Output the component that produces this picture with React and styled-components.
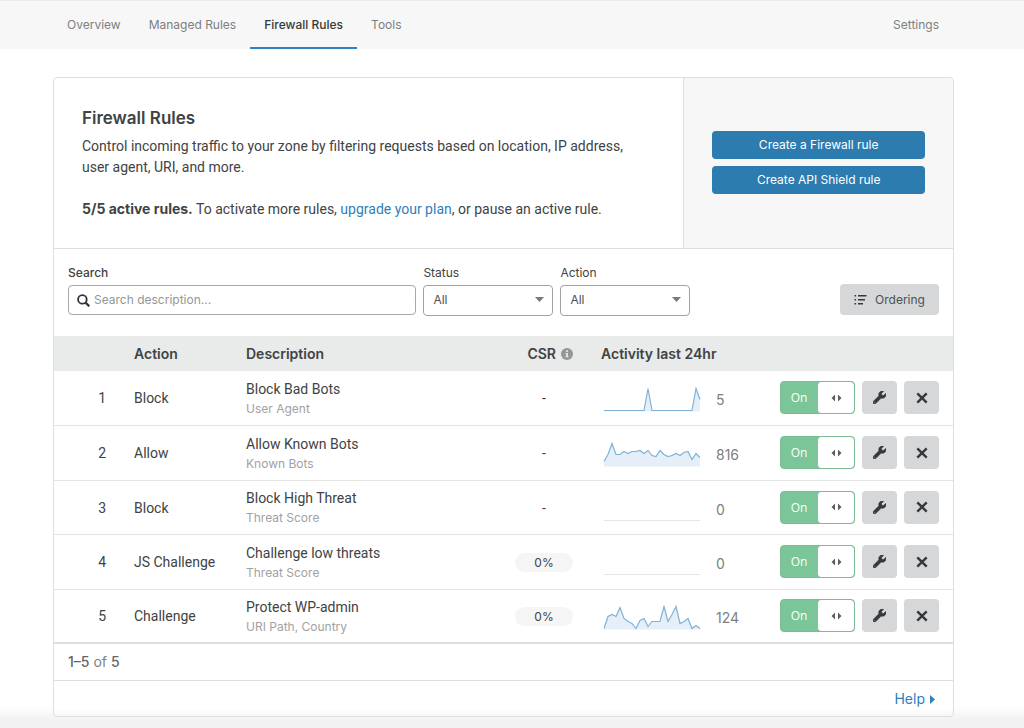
import React, { useId, useState } from 'react';
import styled, { createGlobalStyle } from 'styled-components';
import { FaWrench } from 'react-icons/fa';

const GlobalStyle = createGlobalStyle`
    *, *::before, *::after {
        box-sizing: border-box;
    }
    body {
        margin: 0;
        background-color: #fff;
        color: #404344;
        font-family: Inter, "Liberation Sans", sans-serif;
        font-size: 14px;
        line-height: 21px;
    }
    button, input, select {
        font-family: inherit;
    }
`;

const Page = styled.div`
    min-height: 100vh;
    display: flex;
    flex-direction: column;
    background: linear-gradient(to top, #f1f1f1 8px, #fff 22px);
`;

const NavBar = styled.nav`
    background-color: #f7f7f7;
    border-top: 1px solid #ebebeb;
    padding-right: 18px;
`;

const NavInner = styled.div`
    display: flex;
    max-width: 900px;
    margin: 0 auto;
`;

const Tab = styled.a`
    height: 48px;
    padding: 0 14px;
    line-height: 47px;
    font-size: 12px;
    text-decoration: none;
    color: ${(p) => (p.$active ? '#36393a' : '#7d7f80')};
    font-weight: ${(p) => (p.$active ? 500 : 400)};
    border-bottom: ${(p) => (p.$active ? '2px solid #2f83bf' : '0')};
    &:last-child {
        margin-left: auto;
    }
`;

const Main = styled.main`
    padding: 28px 17px 12px 0;
`;

const Card = styled.section`
    max-width: 901px;
    margin: 0 auto;
    background: linear-gradient(to top, #f7f7f7, #fff 8px);
    border: 1px solid #dedede;
    border-radius: 4px;
    overflow: hidden;
`;

const Intro = styled.header`
    display: flex;
    border-bottom: 1px solid #dedede;
`;

const IntroText = styled.div`
    flex: 1;
    padding: 28px;
`;

const Title = styled.h2`
    margin: 0 0 6px;
    font-size: 17px;
    line-height: 24px;
    font-weight: 600;
`;

const Paragraph = styled.p`
    max-width: 560px;
    margin: 0 0 21px;
    font-family: Roboto, sans-serif;
    &:last-child {
        margin-bottom: 0;
    }
    strong {
        font-family: Inter, sans-serif;
        line-height: 20px;
    }
`;

const Link = styled.a`
    color: #2f7fbc;
    text-decoration: none;
`;

const IntroActions = styled.div`
    width: 30%;
    padding: 0 28px 2px;
    display: flex;
    flex-direction: column;
    justify-content: center;
    gap: 7px;
    background-color: #f7f7f7;
    border-left: 1px solid #dedede;
`;

const PrimaryButton = styled.button`
    height: 28px;
    border: 0;
    border-radius: 4px;
    background-color: #2c7cb0;
    color: #fff;
    font-size: 12px;
    cursor: pointer;
`;

const Filters = styled.form`
    display: flex;
    align-items: flex-start;
    gap: 7px;
    padding: 14px 14px 20px;
`;

const Field = styled.div`
    display: flex;
    flex-direction: column;
    width: ${(p) => p.$width};
`;

const Label = styled.label`
    font-size: 12px;
    line-height: 20px;
    margin-bottom: 2px;
    font-weight: ${(p) => (p.$strong ? 500 : 400)};
`;

const SearchBox = styled.div`
    display: flex;
    align-items: center;
    gap: 4px;
    height: 30px;
    padding: 0 8px;
    border: 1px solid #a5a7a8;
    border-radius: 4px;
    background-color: #fff;
`;

const SearchInput = styled.input`
    flex: 1;
    min-width: 0;
    padding: 0 0 2px;
    border: 0;
    outline: 0;
    font-size: 12px;
    background: none;
    &::placeholder {
        color: #949697;
    }
`;

const SelectBox = styled.div`
    display: grid;
    align-items: center;
    & > * {
        grid-area: 1 / 1;
    }
    & > svg {
        justify-self: end;
        margin: 0 9px 2px 0;
        pointer-events: none;
    }
`;

const Select = styled.select`
    appearance: none;
    width: 100%;
    height: 31px;
    padding: 0 9px 2px;
    border: 1px solid #a0a2a3;
    border-radius: 4px;
    background-color: #fff;
    color: #4d5051;
    font-size: 12px;
`;

const OrderingButton = styled.button`
    display: flex;
    align-items: center;
    justify-content: center;
    gap: 8px;
    width: 99px;
    height: 31px;
    margin: 21px 0 0 auto;
    border: 0;
    border-radius: 4px;
    background-color: #d5d7d8;
    color: #4d5051;
    font-size: 12px;
    cursor: pointer;
`;

const Table = styled.table`
    width: 100%;
    table-layout: fixed;
    border-collapse: collapse;
`;

const HeadCell = styled.th`
    height: 35px;
    padding: 0 14px;
    background-color: #e9eaea;
    font-weight: 600;
    text-align: ${(p) => p.$align || 'left'};
    width: ${(p) => p.$width || 'auto'};
    white-space: nowrap;
    svg {
        margin-left: 5px;
        vertical-align: -1px;
    }
`;

const Row = styled.tr`
    height: 54px;
    border-bottom: 1px solid #e4e4e4;
    &:nth-child(even) {
        height: 55px;
    }
    &:last-child {
        border-bottom: 2px solid #dedede;
    }
`;

const Cell = styled.td`
    padding: 2px 14px 0;
    font-family: Roboto, sans-serif;
    text-align: ${(p) => p.$align || 'left'};
    white-space: nowrap;
`;

const Description = styled.div`
    line-height: 20px;
`;

const Muted = styled.div`
    color: #a0a2a3;
    font-family: Inter, sans-serif;
    font-size: 12px;
    line-height: 20px;
`;

const Pill = styled.span`
    display: block;
    border-radius: 10px;
    background-color: #f5f5f5;
    font-family: Inter, sans-serif;
    font-size: 12px;
    line-height: 19px;
`;

const Activity = styled.div`
    display: flex;
    align-items: center;
    gap: 15px;
    padding: 2px 0 0 2px;
    color: #7d7f80;
    font-family: Inter, sans-serif;
`;

const Controls = styled.div`
    display: flex;
    justify-content: flex-end;
    gap: 7px;
    padding-bottom: 2px;
`;

const Toggle = styled.label`
    display: flex;
    width: 75px;
    height: 33px;
    border: 1px solid ${(p) => (p.$on ? '#7dbb95' : '#a5a7a8')};
    border-radius: 4px;
    background-color: ${(p) => (p.$on ? '#7ac698' : '#b6b8b9')};
    cursor: pointer;
    flex-direction: ${(p) => (p.$on ? 'row' : 'row-reverse')};
    overflow: hidden;
`;

const HiddenCheckbox = styled.input`
    appearance: none;
    width: 0;
    height: 0;
    margin: 0;
`;

const ToggleText = styled.span`
    flex: 1;
    color: #fff;
    font-family: "Open Sans", sans-serif;
    font-size: 12px;
    line-height: 32px;
    text-align: center;
`;

const Knob = styled.span`
    width: 37px;
    display: flex;
    align-items: center;
    justify-content: center;
    border-left: 1px solid #8fbfa2;
    border-radius: 4px;
    background-color: #fff;
`;

const IconButton = styled.button`
    display: flex;
    align-items: center;
    justify-content: center;
    width: 35px;
    height: 33px;
    padding: 0;
    border: 0;
    border-radius: 4px;
    background-color: #d5d7d8;
    color: #36393a;
    cursor: pointer;
`;

const Pagination = styled.div`
    padding: 7px 14px;
    color: #7d7f80;
    line-height: 22px;
    border-bottom: 1px solid #dedede;
    strong {
        font-weight: 500;
        color: #62676a;
    }
`;

const Footer = styled.footer`
    padding: 7px 18px;
    text-align: right;
    svg {
        margin-left: 5px;
    }
`;

const SearchIcon = () => (
    <svg width="13" height="13" viewBox="0 0 13 13" fill="none" stroke="#303334" strokeWidth="1.8" aria-hidden="true">
        <circle cx="5.4" cy="5.4" r="4.3" />
        <path d="M8.6 8.6L12.3 12.3" strokeWidth="2.2" />
    </svg>
);

const CaretIcon = () => (
    <svg width="9" height="5" viewBox="0 0 9 5" fill="#777a7b" aria-hidden="true">
        <path d="M0 0h9L4.5 5z" />
    </svg>
);

const ListIcon = () => (
    <svg width="13" height="12" viewBox="0 0 13 12" fill="#36393a" aria-hidden="true">
        <path d="M.5 1h1.6v1.6H.5zM.5 5h1.6v1.6H.5zM.5 9h1.6v1.6H.5zM4 1h8.5v1.6H4zM4 5h7v1.6H4zM4 9h5v1.6H4z" />
    </svg>
);

const InfoIcon = () => (
    <svg width="12" height="12" viewBox="0 0 12 12" aria-hidden="true">
        <circle cx="6" cy="6" r="6" fill="#949697" />
        <path d="M5.2 2.3h1.7v1.6H5.2zM4.6 4.9h2.3v3.4h.7v1H4.5v-1h.7V5.9h-.6z" fill="#e9eaea" />
    </svg>
);

const ArrowsIcon = () => (
    <svg width="11" height="8" viewBox="0 0 11 8" fill="#5c5f60" aria-hidden="true">
        <path d="M4 0.5v7L0.5 4zM7 0.5v7L10.5 4z" />
    </svg>
);

const WrenchIcon = styled(FaWrench)`
    width: 13px;
    height: 13px;
    stroke: currentColor;
    stroke-width: 24px;
`;

const CloseIcon = () => (
    <svg width="12" height="12" viewBox="0 0 12 12" fill="none" stroke="#36393a" strokeWidth="2.4" aria-hidden="true">
        <path d="M1.3 1.3L10.7 10.7M10.7 1.3L1.3 10.7" />
    </svg>
);

const HelpArrow = () => (
    <svg width="5" height="9" viewBox="0 0 5 9" fill="#2f7fbc" aria-hidden="true">
        <path d="M0 0l5 4.5L0 9z" />
    </svg>
);

// 25 hourly samples, 0 - 23, drawn 4px apart
const Sparkline = ({ data }) => {
    if (!data) {
        return (
            <svg width="98" height="25" viewBox="0 0 98 25" aria-hidden="true">
                <path d="M1 23.5H97" stroke="#e3e6e8" />
            </svg>
        );
    }
    const points = data.map((value, i) => `${1 + i * 4},${24.5 - value}`).join(' ');
    return (
        <svg width="98" height="25" viewBox="0 0 98 25" aria-hidden="true">
            <polygon points={`1,24.5 ${points} 97,24.5`} fill="#e6eff7" />
            <polyline points={points} fill="none" stroke="#7fb2d6" strokeWidth="1.2" />
        </svg>
    );
};

const rules = [
    {
        id: 1, action: 'Block', description: 'Block Bad Bots', fields: 'User Agent', csr: null, count: 5,
        activity: [1, 1, 1, 1, 1, 1, 1, 1, 1, 1, 1, 23, 1, 1, 1, 1, 1, 1, 1, 1, 1, 1, 1, 23, 12],
    },
    {
        id: 2, action: 'Allow', description: 'Allow Known Bots', fields: 'Known Bots', csr: null, count: 816,
        activity: [5, 12, 23, 12, 12, 15, 13, 15, 15, 16, 13, 16, 11, 10, 16, 12, 10, 11, 13, 11, 14, 15, 7, 13, 9],
    },
    { id: 3, action: 'Block', description: 'Block High Threat', fields: 'Threat Score', csr: null, count: 0 },
    { id: 4, action: 'JS Challenge', description: 'Challenge low threats', fields: 'Threat Score', csr: '0%', count: 0 },
    {
        id: 5, action: 'Challenge', description: 'Protect WP-admin', fields: 'URI Path, Country', csr: '0%', count: 124,
        activity: [1, 13, 15, 13, 22, 11, 8, 6, 1, 9, 11, 3, 8, 8, 8, 23, 8, 15, 23, 6, 8, 11, 1, 4, 1],
    },
];

const SelectField = ({ label }) => {
    const id = useId();
    return (
        <Field $width="130px">
            <Label htmlFor={id}>{label}</Label>
            <SelectBox>
                <Select id={id}>
                    <option>All</option>
                </Select>
                <CaretIcon />
            </SelectBox>
        </Field>
    );
};

const RuleRow = ({ rule }) => {
    const [on, setOn] = useState(true);

    return (
        <Row>
            <Cell $align="right">{rule.id}</Cell>
            <Cell>{rule.action}</Cell>
            <Cell>
                <Description>{rule.description}</Description>
                <Muted>{rule.fields}</Muted>
            </Cell>
            <Cell $align="center">{rule.csr ? <Pill>{rule.csr}</Pill> : '-'}</Cell>
            <Cell>
                <Activity>
                    <Sparkline data={rule.activity} />
                    {rule.count}
                </Activity>
            </Cell>
            <Cell>
                <Controls>
                    <Toggle $on={on}>
                        <HiddenCheckbox
                            type="checkbox"
                            checked={on}
                            onChange={(e) => setOn(e.target.checked)}
                        />
                        <ToggleText>{on ? 'On' : 'Off'}</ToggleText>
                        <Knob><ArrowsIcon /></Knob>
                    </Toggle>
                    <IconButton type="button" aria-label={`Edit ${rule.description}`}>
                        <WrenchIcon />
                    </IconButton>
                    <IconButton type="button" aria-label={`Delete ${rule.description}`}>
                        <CloseIcon />
                    </IconButton>
                </Controls>
            </Cell>
        </Row>
    );
};

const App = () => {
    const [search, setSearch] = useState('');

    return (
        <Page>
            <GlobalStyle />
            <NavBar>
                <NavInner>
                    <Tab href="#overview">Overview</Tab>
                    <Tab href="#managed">Managed Rules</Tab>
                    <Tab href="#firewall" $active>Firewall Rules</Tab>
                    <Tab href="#tools">Tools</Tab>
                    <Tab href="#settings">Settings</Tab>
                </NavInner>
            </NavBar>
            <Main>
                <Card>
                    <Intro>
                        <IntroText>
                            <Title>Firewall Rules</Title>
                            <Paragraph>
                                Control incoming traffic to your zone by filtering requests based on location, IP address,
                                user agent, URI, and more.
                            </Paragraph>
                            <Paragraph>
                                <strong>5/5 active rules.</strong> To activate more rules,{' '}
                                <Link href="#upgrade">upgrade your plan</Link>, or pause an active rule.
                            </Paragraph>
                        </IntroText>
                        <IntroActions>
                            <PrimaryButton type="button">Create a Firewall rule</PrimaryButton>
                            <PrimaryButton type="button">Create API Shield rule</PrimaryButton>
                        </IntroActions>
                    </Intro>
                    <Filters onSubmit={(e) => e.preventDefault()}>
                        <Field $width="40%">
                            <Label htmlFor="search" $strong>Search</Label>
                            <SearchBox>
                                <SearchIcon />
                                <SearchInput
                                    id="search"
                                    placeholder="Search description..."
                                    value={search}
                                    onChange={(e) => setSearch(e.target.value)}
                                />
                            </SearchBox>
                        </Field>
                        <SelectField label="Status" />
                        <SelectField label="Action" />
                        <OrderingButton type="button">
                            <ListIcon />
                            Ordering
                        </OrderingButton>
                    </Filters>
                    <Table>
                        <thead>
                            <tr>
                                <HeadCell $width="66px" />
                                <HeadCell $width="112px">Action</HeadCell>
                                <HeadCell>Description</HeadCell>
                                <HeadCell $width="86px" $align="right">CSR<InfoIcon /></HeadCell>
                                <HeadCell $width="168px">Activity last 24hr</HeadCell>
                                <HeadCell $width="198px" />
                            </tr>
                        </thead>
                        <tbody>
                            {rules.map((rule) => <RuleRow key={rule.id} rule={rule} />)}
                        </tbody>
                    </Table>
                    <Pagination>
                        <strong>1–5</strong> of <strong>5</strong>
                    </Pagination>
                    <Footer>
                        <Link href="#help">Help<HelpArrow /></Link>
                    </Footer>
                </Card>
            </Main>
        </Page>
    );
};

export default App;
